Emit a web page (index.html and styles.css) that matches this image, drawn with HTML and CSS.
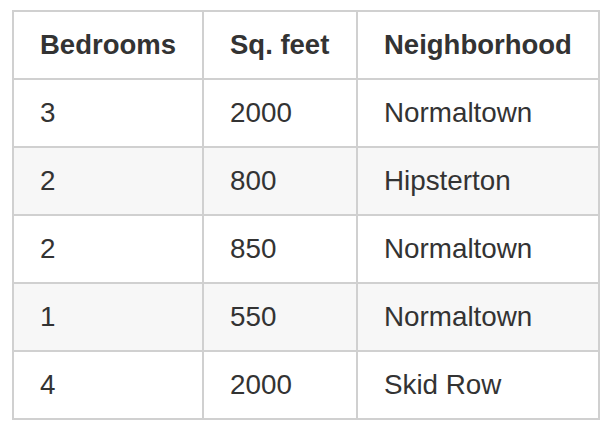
FILE: index.html
```html
<!DOCTYPE html>
<html>
<head>
<meta charset="utf-8">
<link rel="stylesheet" href="styles.css">
</head>
<body>
<table class="data-table">
  <colgroup>
    <col class="col-a">
    <col class="col-b">
    <col class="col-c">
  </colgroup>
  <thead>
    <tr><th>Bedrooms</th><th>Sq. feet</th><th>Neighborhood</th></tr>
  </thead>
  <tbody>
    <tr><td>3</td><td>2000</td><td>Normaltown</td></tr>
    <tr class="striped"><td>2</td><td>800</td><td>Hipsterton</td></tr>
    <tr><td>2</td><td>850</td><td>Normaltown</td></tr>
    <tr class="striped"><td>1</td><td>550</td><td>Normaltown</td></tr>
    <tr><td>4</td><td>2000</td><td>Skid Row</td></tr>
  </tbody>
</table>
</body>
</html>
```
FILE: styles.css
```css
html, body {
  margin: 0;
  padding: 0;
  background: #ffffff;
}
body {
  padding: 10px 0 0 12px;
  font-family: "Liberation Sans", Arial, sans-serif;
  color: #333333;
}
.data-table {
  border-collapse: separate;
  border-spacing: 0;
  table-layout: fixed;
  width: 588px;
  border-top: 2px solid #d0d0d0;
  border-left: 2px solid #d0d0d0;
}
.col-a { width: 190px; }
.col-b { width: 154px; }
.col-c { width: 242px; }
.data-table th,
.data-table td {
  box-sizing: border-box;
  height: 68px;
  padding: 0 0 0 26px;
  border-right: 2px solid #d0d0d0;
  border-bottom: 2px solid #d0d0d0;
  text-align: left;
  vertical-align: middle;
  white-space: nowrap;
}
.data-table th {
  font-weight: bold;
  font-size: 27.5px;
}
.data-table td {
  font-weight: normal;
  font-size: 27.8px;
}
.data-table .striped td {
  background: #f7f7f7;
}
```
